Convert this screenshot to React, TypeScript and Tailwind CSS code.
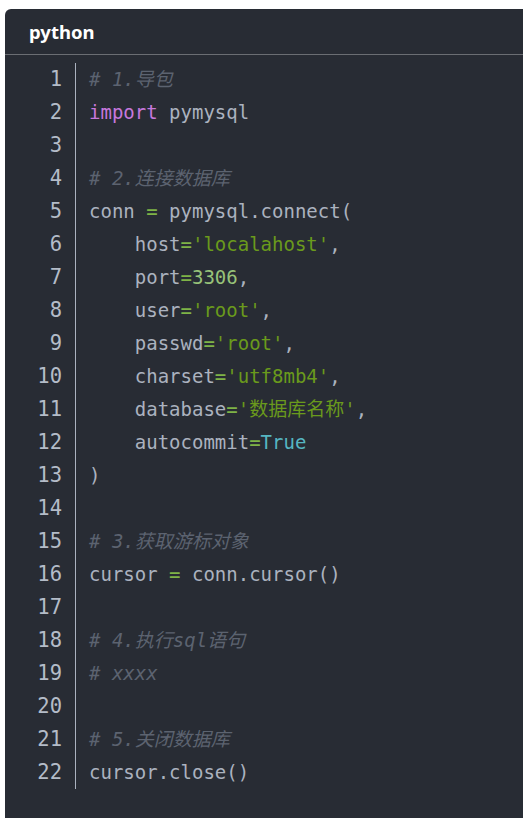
import React from "react";

type Tok = [string, string];

const c = {
  txt: "text-[#abb2bf]",
  kw: "text-[#c678dd]",
  op: "text-[#7fb347]",
  str: "text-[#6a9a1c]",
  num: "text-[#98c379]",
  bool: "text-[#56b6c2]",
  com: "text-[#5c6370] italic",
};

const lines: Tok[][] = [
  [["# 1.导包", c.com]],
  [["import", c.kw], [" pymysql", c.txt]],
  [],
  [["# 2.连接数据库", c.com]],
  [["conn ", c.txt], ["=", c.op], [" pymysql.connect(", c.txt]],
  [["    host", c.txt], ["=", c.op], ["'localahost'", c.str], [",", c.txt]],
  [["    port", c.txt], ["=", c.op], ["3306", c.num], [",", c.txt]],
  [["    user", c.txt], ["=", c.op], ["'root'", c.str], [",", c.txt]],
  [["    passwd", c.txt], ["=", c.op], ["'root'", c.str], [",", c.txt]],
  [["    charset", c.txt], ["=", c.op], ["'utf8mb4'", c.str], [",", c.txt]],
  [["    database", c.txt], ["=", c.op], ["'数据库名称'", c.str], [",", c.txt]],
  [["    autocommit", c.txt], ["=", c.op], ["True", c.bool]],
  [[")", c.txt]],
  [],
  [["# 3.获取游标对象", c.com]],
  [["cursor ", c.txt], ["=", c.op], [" conn.cursor()", c.txt]],
  [],
  [["# 4.执行sql语句", c.com]],
  [["# xxxx", c.com]],
  [],
  [["# 5.关闭数据库", c.com]],
  [["cursor.close()", c.txt]],
];

const mono = "font-['DejaVu_Sans_Mono','Noto_Sans_CJK_SC',monospace]";

export default function App() {
  return (
    <div className="bg-white pt-[9px] pl-[5px] h-[818px] overflow-hidden">
      <div className="bg-[#282c34] rounded-tl-[6px] h-[809px]">
        <div className="h-[46px] flex items-center pl-[24px] border-b border-[#6b6e73]">
          <span className="font-['Noto_Sans',sans-serif] font-bold text-[18.5px] text-white">python</span>
        </div>
        <div className={`flex pt-[8px] leading-[33px] ${mono}`}>
          <div className="w-[71px] pr-[13px] text-right text-[20.5px] text-[#b4bcc8] border-r border-[#abb2bf]">
            {lines.map((_, i) => (
              <div key={i} className="h-[33px]">{i + 1}</div>
            ))}
          </div>
          <div className="pl-[13px] whitespace-pre text-[19px]">
            {lines.map((l, i) => (
              <div key={i} className="h-[33px]">
                {l.map(([t, cls], j) => (
                  <span key={j} className={cls}>
                    {t}
                  </span>
                ))}
              </div>
            ))}
          </div>
        </div>
      </div>
    </div>
  );
}
